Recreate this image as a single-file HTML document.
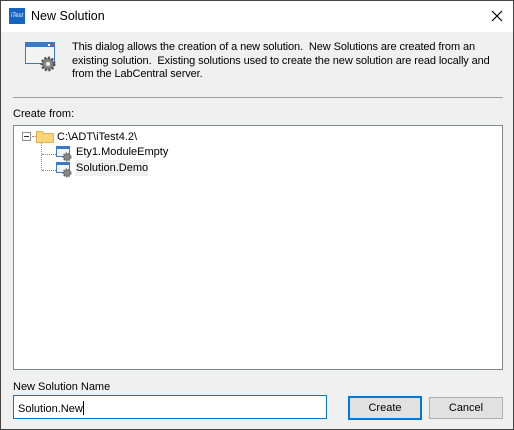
<!DOCTYPE html><html><head><style>
body{margin:0;width:514px;height:430px;overflow:hidden;font-family:"Liberation Sans",sans-serif;font-size:11px;color:#000}
.win{position:absolute;left:0;top:0;width:512px;height:428px;border:1px solid #444;background:#f0f0f0}
.title{position:absolute;left:0;top:0;width:512px;height:31px;background:#fff}
.a{position:absolute;white-space:nowrap}
</style></head><body><div class="win">
<div class="title">
<div class="a" style="left:8px;top:7px;width:16px;height:16px;background:#1565c0;color:#fff;font-size:6px;line-height:16px;text-align:center;font-style:italic">iTest</div>
<div class="a" style="left:30px;top:8px;font-size:12.5px">New Solution</div>
<svg class="a" style="left:490px;top:9px" width="12" height="12"><path d="M1 1L11 11M11 1L1 11" stroke="#000" stroke-width="1.2"/></svg>
</div>
<svg class="a" style="left:23px;top:40px" width="34" height="32"><rect x="1.5" y="1.5" width="29" height="21" fill="#f4f4f4" stroke="#3a78c8"/><rect x="2" y="2" width="28" height="4" fill="#3a78c8"/><rect x="24" y="3" width="2" height="2" fill="#fff"/><rect x="27" y="3" width="2" height="2" fill="#e33"/><circle cx="24" cy="23" r="6" fill="#888" stroke="#555" stroke-dasharray="2 1.5" stroke-width="3"/><circle cx="24" cy="23" r="2" fill="#eee"/></svg>
<div class="a" style="left:71px;top:40px;line-height:13.5px;letter-spacing:-0.1px">This dialog allows the creation of a new solution.&nbsp; New Solutions are created from an<br>existing solution.&nbsp; Existing solutions used to create the new solution are read locally and<br>from the LabCentral server.</div>
<div class="a" style="left:12px;top:96px;width:490px;height:1px;background:#a0a0a0"></div>
<div class="a" style="left:12px;top:107px">Create from:</div>
<div class="a" style="left:12px;top:124px;width:488px;height:243px;background:#fff;border:1px solid #828790">
<div class="a" style="left:8px;top:6px;width:7px;height:7px;border:1px solid #919191;background:#fff"></div>
<div class="a" style="left:10px;top:10px;width:5px;height:1px;background:#333"></div>
<div class="a" style="left:18px;top:10px;width:4px;border-top:1px dotted #888"></div>
<div class="a" style="left:27px;top:14px;height:30px;border-left:1px dotted #888"></div>
<div class="a" style="left:28px;top:28px;width:14px;border-top:1px dotted #888"></div>
<div class="a" style="left:28px;top:44px;width:14px;border-top:1px dotted #888"></div>
<svg class="a" style="left:22px;top:3px" width="18" height="14"><path d="M0.5 2.5h6l1 2h10v9h-17z" fill="#fcd57a" stroke="#e2b44c"/></svg>
<div class="a" style="left:43px;top:5px">C:\ADT\iTest4.2\</div>
<svg class="a" style="left:42px;top:20px" width="17" height="16"><rect x="0.5" y="0.5" width="13" height="10" fill="#f4f4f4" stroke="#3a78c8"/><rect x="1" y="1" width="12" height="2" fill="#3a78c8"/><circle cx="11" cy="11" r="3.5" fill="#888" stroke="#666" stroke-dasharray="1.5 1" stroke-width="2"/></svg>
<div class="a" style="left:62px;top:20px">Ety1.ModuleEmpty</div>
<svg class="a" style="left:42px;top:36px" width="17" height="16"><rect x="0.5" y="0.5" width="13" height="10" fill="#f4f4f4" stroke="#3a78c8"/><rect x="1" y="1" width="12" height="2" fill="#3a78c8"/><circle cx="11" cy="11" r="3.5" fill="#888" stroke="#666" stroke-dasharray="1.5 1" stroke-width="2"/></svg>
<div class="a" style="left:61px;top:34px;width:73px;height:16px;background:#f0f0f0"></div>
<div class="a" style="left:62px;top:36px">Solution.Demo</div>
</div>
<div class="a" style="left:12px;top:380px">New Solution Name</div>
<div class="a" style="left:12px;top:394px;width:312px;height:22px;background:#fff;border:1px solid #0078d7"></div>
<div class="a" style="left:17px;top:400px">Solution.New<span style="display:inline-block;width:1px;height:14px;background:#000;vertical-align:-3px"></span></div>
<div class="a" style="left:347px;top:395px;width:70px;height:20px;background:#e1e1e1;border:2px solid #0078d7;text-align:center;line-height:21px">Create</div>
<div class="a" style="left:428px;top:396px;width:72px;height:20px;background:#e1e1e1;border:1px solid #adadad;text-align:center;line-height:21px">Cancel</div>
</div></body></html>
